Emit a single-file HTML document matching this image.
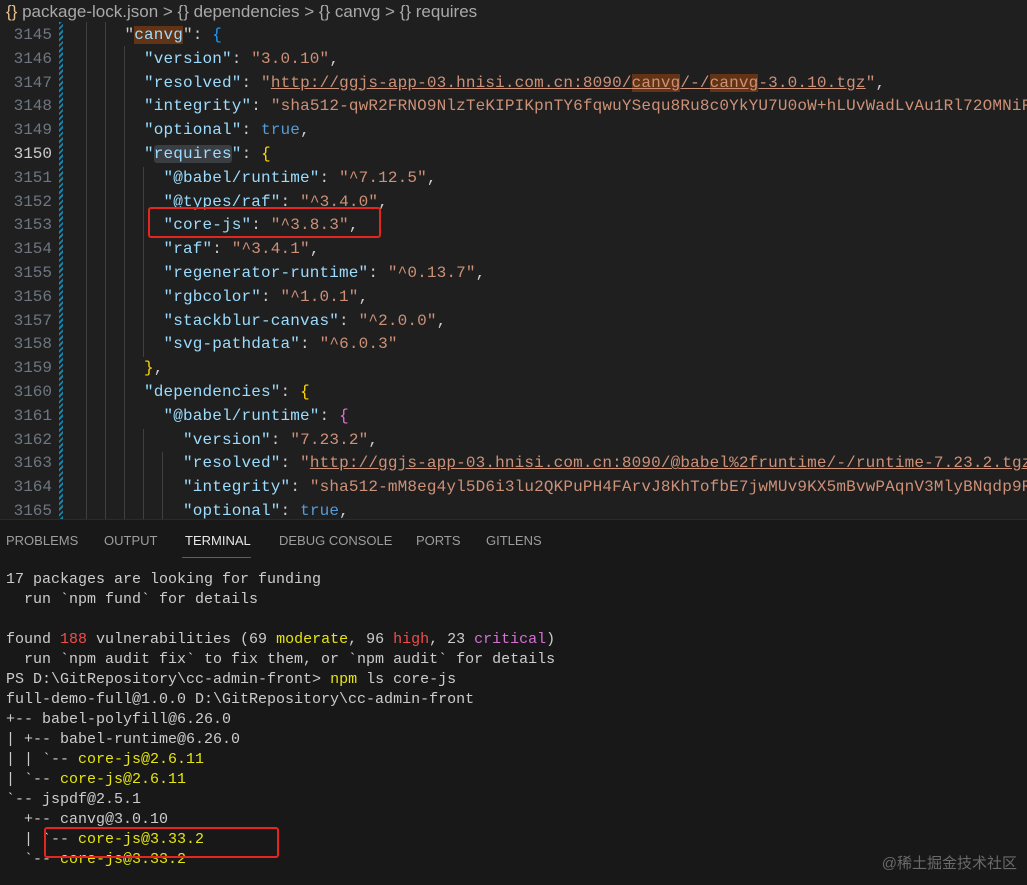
<!DOCTYPE html>
<html><head><meta charset="utf-8"><style>
*{margin:0;padding:0;box-sizing:border-box}
body{width:1027px;height:885px;overflow:hidden;background:#1f1f1f;position:relative;font-family:"Liberation Mono",monospace}
.bc{position:absolute;left:0;top:0;width:1027px;height:24px;font:17px "Liberation Sans",sans-serif;color:#a9a9a9;line-height:24px;padding-left:6px;white-space:pre}
.bc .y{color:#e2c08d}
.ed{position:absolute;left:0;top:22px;width:1027px;height:497px;overflow:hidden}
.ln{position:absolute;left:0;width:52px;text-align:right;color:#6e7681;font-size:16px;line-height:23.8px}
.cd{position:absolute;left:66px;font-size:16px;line-height:23.8px;white-space:pre;color:#cccccc;letter-spacing:0.15px}
.k{color:#9cdcfe}.s{color:#ce9178}.b{color:#569cd6}.g{color:#ffd700}.m{color:#da70d6}.bl{color:#179fff}
.hl{background:#623315}.rq{background:#3a3d41;border-radius:3px}
.u{text-decoration:underline}
.gd{position:absolute;width:1px;background:#404040}
.hatch{position:absolute;left:59px;top:0;width:4px;height:497px;background:repeating-linear-gradient(135deg,#1b81a8 0 2px,transparent 2px 4px)}
.panel{position:absolute;left:0;top:519px;width:1027px;height:366px;background:#181818;border-top:1px solid #2b2b2b}
.tab{position:absolute;top:13px;font:13px "Liberation Sans",sans-serif;color:#9d9d9d}
.term{position:absolute;left:6px;top:50px;font-size:15px;line-height:20px;white-space:pre;color:#cccccc}
.y2{color:#e5e510}.r{color:#f14c4c}.mg{color:#d670d6}
.box{position:absolute;border:2.5px solid #e3261f;border-radius:3px}
.wm{position:absolute;right:10px;bottom:12px;font:15px "Liberation Sans","Noto Sans CJK SC",sans-serif;color:#6a6a6a}
</style></head><body>
<div class="bc"><span class="y">{}</span> package-lock.json &gt; {} dependencies &gt; {} canvg &gt; {} requires</div>
<div class="ed">
<div class="hatch"></div>
<div class="gd" style="left:86px;top:0;height:497px"></div>
<div class="gd" style="left:105px;top:0;height:497px"></div>
<div class="gd" style="left:124px;top:24px;height:473px"></div>
<div class="gd" style="left:143px;top:145px;height:190px"></div>
<div class="gd" style="left:143px;top:407px;height:92px"></div>
<div class="gd" style="left:162px;top:430px;height:69px"></div>
<div class="ln" style="top:2px">3145<br>3146<br>3147<br>3148<br>3149<br><span style="color:#ccc">3150</span><br>3151<br>3152<br>3153<br>3154<br>3155<br>3156<br>3157<br>3158<br>3159<br>3160<br>3161<br>3162<br>3163<br>3164<br>3165</div>
<div class="cd" style="top:2px">      "<span class="k hl">canvg</span>": <span class="bl">{</span>
        <span class="k">"version"</span>: <span class="s">"3.0.10"</span>,
        <span class="k">"resolved"</span>: <span class="s">"<span class="u">http://ggjs-app-03.hnisi.com.cn:8090/<span class="hl">canvg</span>/-/<span class="hl">canvg</span>-3.0.10.tgz</span>"</span>,
        <span class="k">"integrity"</span>: <span class="s">"sha512-qwR2FRNO9NlzTeKIPIKpnTY6fqwuYSequ8Ru8c0YkYU7U0oW+hLUvWadLvAu1Rl72OMNiFh</span>
        <span class="k">"optional"</span>: <span class="b">true</span>,
        <span class="k">"<span class="rq">requires</span>"</span>: <span class="g">{</span>
          <span class="k">"@babel/runtime"</span>: <span class="s">"^7.12.5"</span>,
          <span class="k">"@types/raf"</span>: <span class="s">"^3.4.0"</span>,
          <span class="k">"core-js"</span>: <span class="s">"^3.8.3"</span>,
          <span class="k">"raf"</span>: <span class="s">"^3.4.1"</span>,
          <span class="k">"regenerator-runtime"</span>: <span class="s">"^0.13.7"</span>,
          <span class="k">"rgbcolor"</span>: <span class="s">"^1.0.1"</span>,
          <span class="k">"stackblur-canvas"</span>: <span class="s">"^2.0.0"</span>,
          <span class="k">"svg-pathdata"</span>: <span class="s">"^6.0.3"</span>
        <span class="g">}</span>,
        <span class="k">"dependencies"</span>: <span class="g">{</span>
          <span class="k">"@babel/runtime"</span>: <span class="m">{</span>
            <span class="k">"version"</span>: <span class="s">"7.23.2"</span>,
            <span class="k">"resolved"</span>: <span class="s">"<span class="u">http://ggjs-app-03.hnisi.com.cn:8090/@babel%2fruntime/-/runtime-7.23.2.tgz</span>"</span>,
            <span class="k">"integrity"</span>: <span class="s">"sha512-mM8eg4yl5D6i3lu2QKPuPH4FArvJ8KhTofbE7jwMUv9KX5mBvwPAqnV3MlyBNqdp9Ry</span>
            <span class="k">"optional"</span>: <span class="b">true</span>,</div>
</div>
<div class="box" style="left:148px;top:207px;width:233px;height:31px"></div>
<div class="panel">
<div class="tab" style="left:6px">PROBLEMS</div>
<div class="tab" style="left:104px">OUTPUT</div>
<div class="tab" style="left:185px;color:#e7e7e7">TERMINAL</div>
<div style="position:absolute;left:182px;top:37px;width:69px;height:1px;background:#0078d4"></div>
<div class="tab" style="left:279px">DEBUG CONSOLE</div>
<div class="tab" style="left:416px">PORTS</div>
<div class="tab" style="left:486px">GITLENS</div>
<div class="term">17 packages are looking for funding
  run `npm fund` for details

found <span class="r">188</span> vulnerabilities (69 <span class="y2">moderate</span>, 96 <span class="r">high</span>, 23 <span class="mg">critical</span>)
  run `npm audit fix` to fix them, or `npm audit` for details
PS D:\GitRepository\cc-admin-front&gt; <span class="y2">npm</span> ls core-js
full-demo-full@1.0.0 D:\GitRepository\cc-admin-front
+-- babel-polyfill@6.26.0
| +-- babel-runtime@6.26.0
| | `-- <span class="y2">core-js@2.6.11</span>
| `-- <span class="y2">core-js@2.6.11</span>
`-- jspdf@2.5.1
  +-- canvg@3.0.10
  | `-- <span class="y2">core-js@3.33.2</span>
  `-- <span class="y2">core-js@3.33.2</span></div>
<div class="wm">@稀土掘金技术社区</div>
</div>
<div class="box" style="left:44px;top:827px;width:235px;height:31px"></div>
</body></html>
